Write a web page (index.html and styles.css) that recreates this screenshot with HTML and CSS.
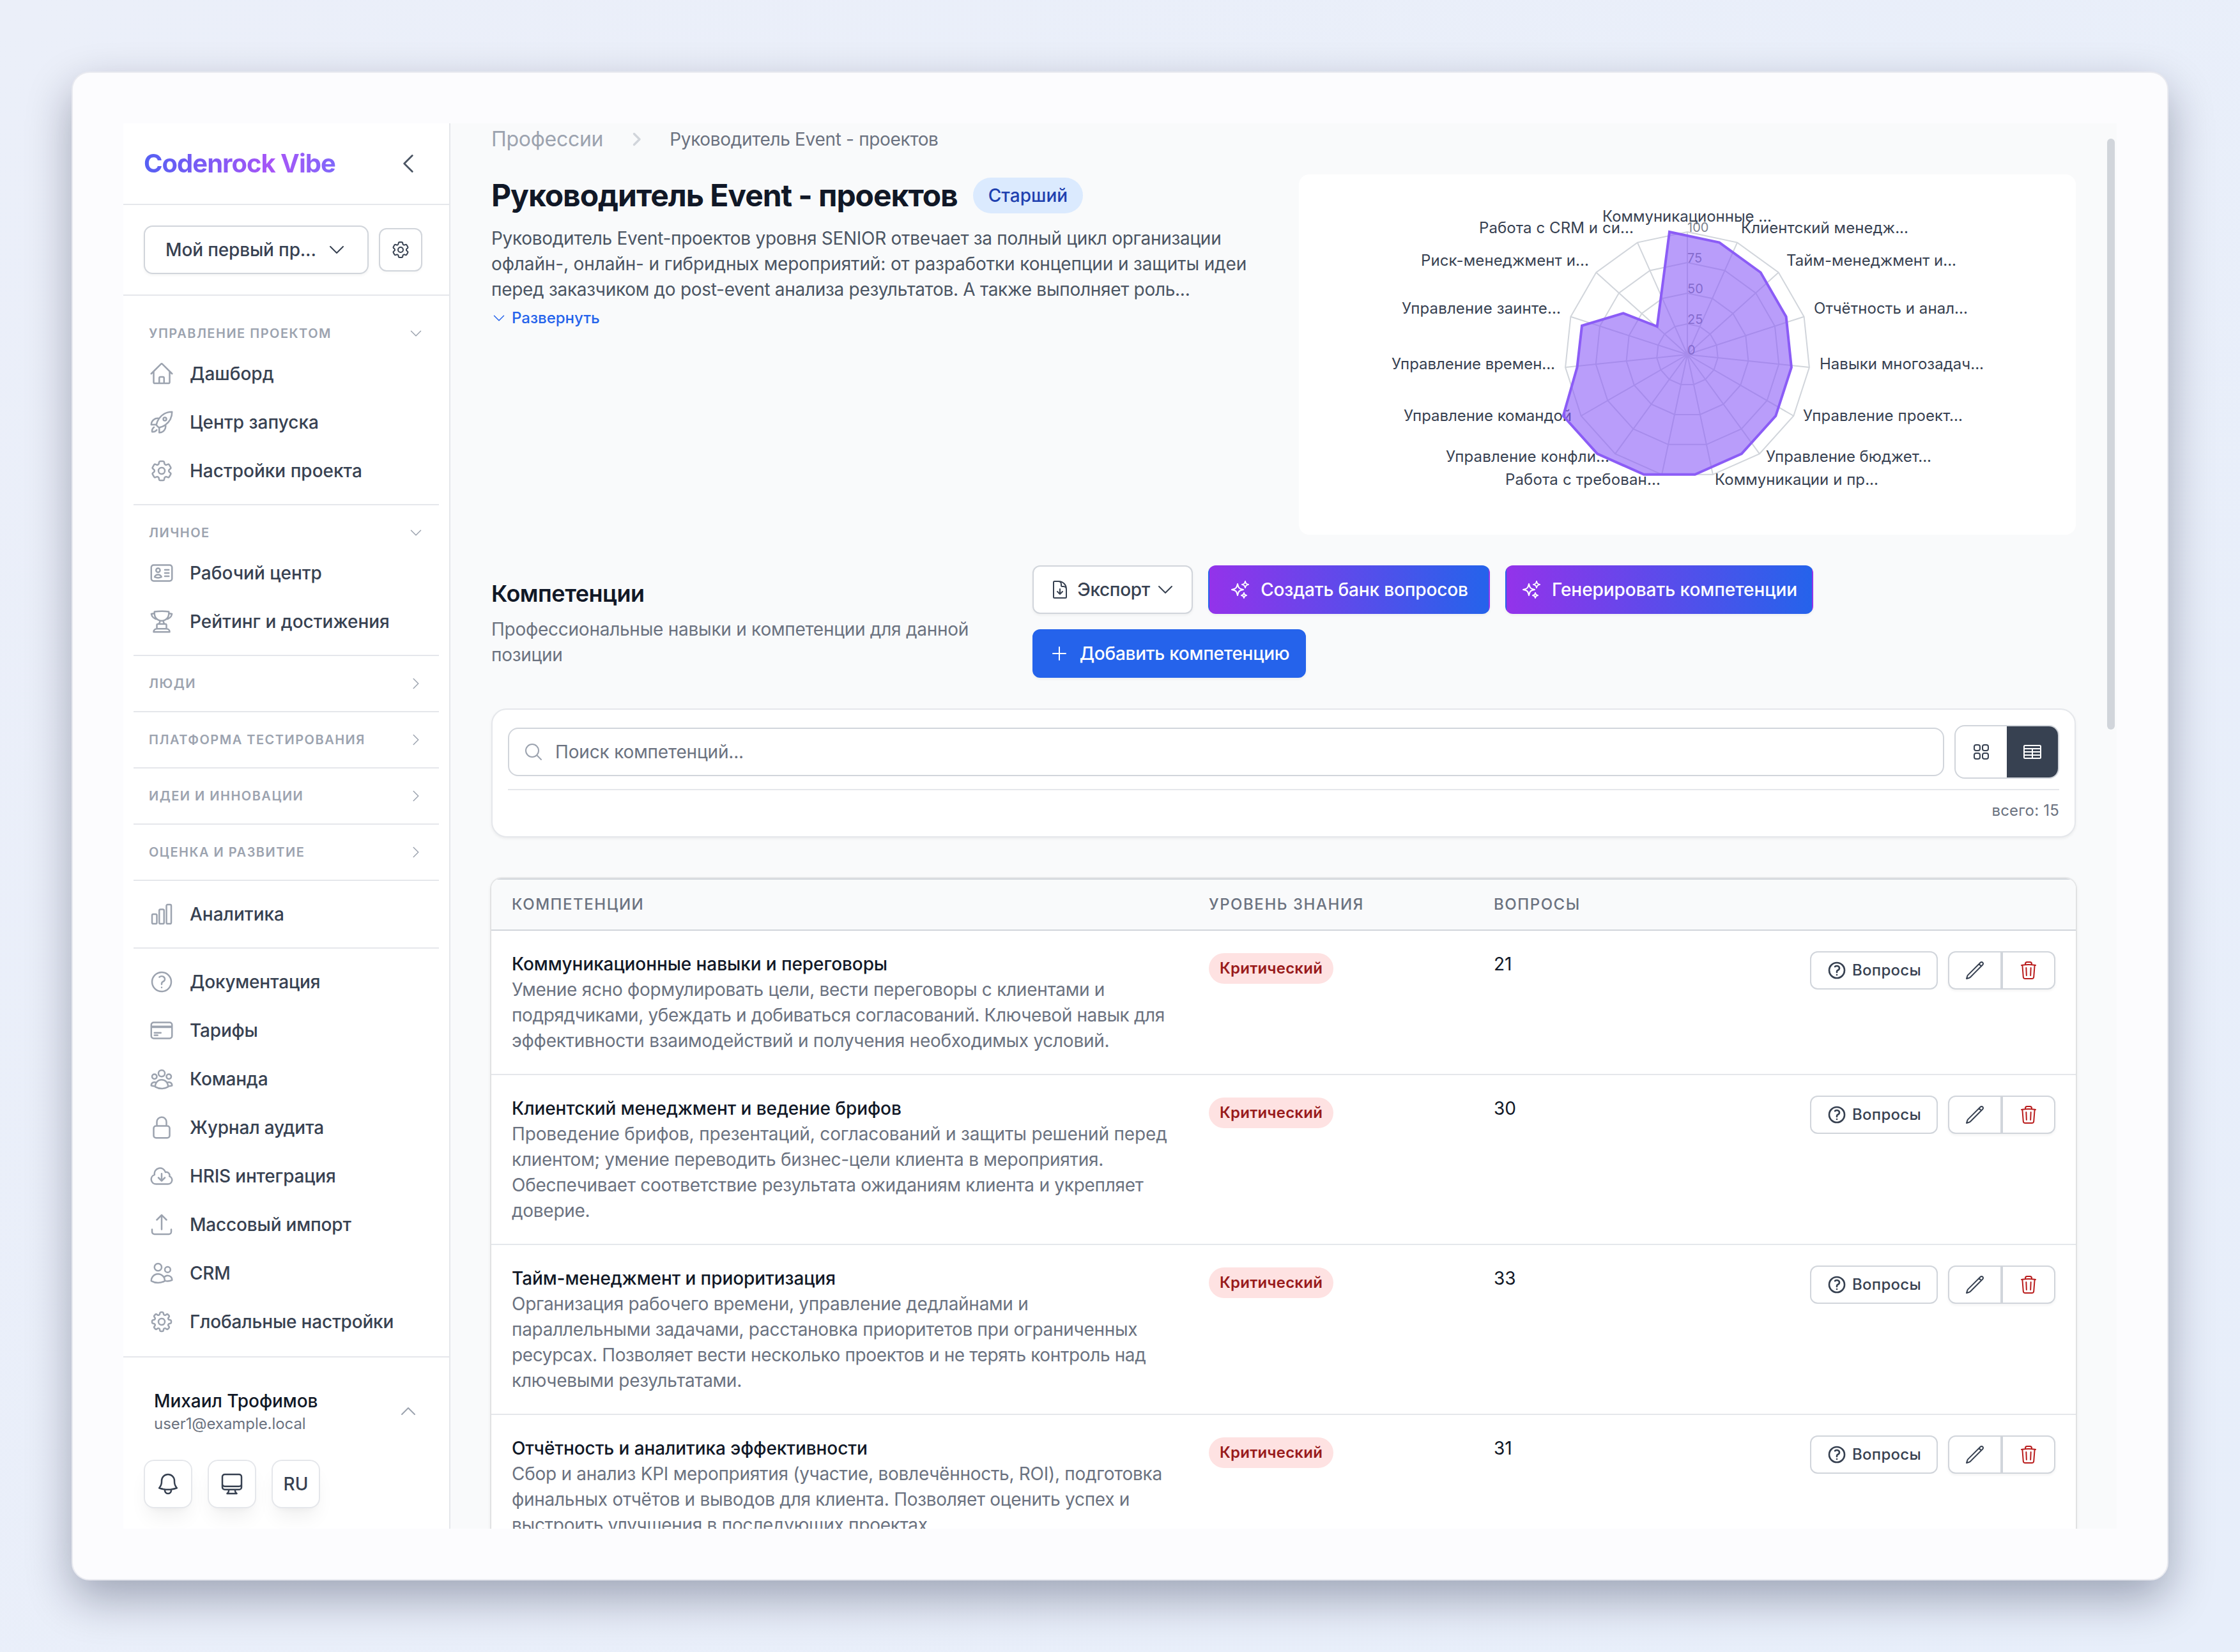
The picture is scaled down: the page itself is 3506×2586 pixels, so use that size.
FILE: index.html
```html
<!DOCTYPE html>
<html lang="ru">
<head>
<meta charset="utf-8">
<title>Codenrock Vibe</title>
<link rel="stylesheet" href="styles.css">
</head>
<body>
<svg class="sprite" aria-hidden="true">
  <symbol id="i-down" viewBox="0 0 24 24"><path d="M19.5 8.25l-7.5 7.5-7.5-7.5"/></symbol>
  <symbol id="i-up" viewBox="0 0 24 24"><path d="M4.5 15.75l7.5-7.5 7.5 7.5"/></symbol>
  <symbol id="i-right" viewBox="0 0 24 24"><path d="M8.25 4.5l7.5 7.5-7.5 7.5"/></symbol>
  <symbol id="i-left" viewBox="0 0 24 24"><path d="M15.75 19.5L8.25 12l7.5-7.5"/></symbol>
  <symbol id="i-crumb" viewBox="0 0 20 20"><path d="M7.75 5.75L12 10l-4.25 4.25"/></symbol>
  <symbol id="i-home" viewBox="0 0 24 24"><path d="M2.25 12l8.954-8.955c.44-.439 1.152-.439 1.591 0L21.75 12M4.5 9.75v10.125c0 .621.504 1.125 1.125 1.125H9.75v-4.875c0-.621.504-1.125 1.125-1.125h2.25c.621 0 1.125.504 1.125 1.125V21h4.125c.621 0 1.125-.504 1.125-1.125V9.75M8.25 21h8.25"/></symbol>
  <symbol id="i-rocket" viewBox="0 0 24 24"><path d="M15.59 14.37a6 6 0 01-5.84 7.38v-4.8m5.84-2.58a14.98 14.98 0 006.16-12.12A14.98 14.98 0 009.631 8.41m5.96 5.96a14.926 14.926 0 01-5.841 2.58m-.119-8.54a6 6 0 00-7.381 5.84h4.8m2.581-5.84a14.927 14.927 0 00-2.58 5.84m2.699 2.7c-.103.021-.207.041-.311.06a15.09 15.09 0 01-2.448-2.448 14.9 14.9 0 01.06-.312m-2.24 2.39a4.493 4.493 0 00-1.757 4.306 4.493 4.493 0 004.306-1.758M16.5 9a1.5 1.5 0 11-3 0 1.5 1.5 0 013 0z"/></symbol>
  <symbol id="i-cog" viewBox="0 0 24 24"><path d="M9.594 3.94c.09-.542.56-.94 1.11-.94h2.593c.55 0 1.02.398 1.11.94l.213 1.281c.063.374.313.686.645.87.074.04.147.083.22.127.324.196.72.257 1.075.124l1.217-.456a1.125 1.125 0 011.37.49l1.296 2.247a1.125 1.125 0 01-.26 1.431l-1.003.827c-.293.24-.438.613-.431.992a6.759 6.759 0 010 .255c-.007.378.138.75.43.99l1.005.828c.424.35.534.954.26 1.43l-1.298 2.247a1.125 1.125 0 01-1.369.491l-1.217-.456c-.355-.133-.75-.072-1.076.124a6.57 6.57 0 01-.22.128c-.331.183-.581.495-.644.869l-.213 1.28c-.09.543-.56.941-1.11.941h-2.594c-.55 0-1.02-.398-1.11-.94l-.213-1.281c-.062-.374-.312-.686-.644-.87a6.52 6.52 0 01-.22-.127c-.325-.196-.72-.257-1.076-.124l-1.217.456a1.125 1.125 0 01-1.369-.49l-1.297-2.247a1.125 1.125 0 01.26-1.431l1.004-.827c.292-.24.437-.613.43-.992a6.932 6.932 0 010-.255c.007-.378-.138-.75-.43-.99l-1.004-.828a1.125 1.125 0 01-.26-1.43l1.297-2.247a1.125 1.125 0 011.37-.491l1.216.456c.356.133.751.072 1.076-.124.072-.044.146-.087.22-.128.332-.183.582-.495.644-.869l.214-1.281z"/><path d="M15 12a3 3 0 11-6 0 3 3 0 016 0z"/></symbol>
  <symbol id="i-cog8" viewBox="0 0 24 24"><path d="M10.343 3.94c.09-.542.56-.94 1.11-.94h1.093c.55 0 1.02.398 1.11.94l.149.894c.07.424.384.764.78.93.398.164.855.142 1.205-.108l.737-.527a1.125 1.125 0 011.45.12l.773.774c.39.389.44 1.002.12 1.45l-.527.737c-.25.35-.272.806-.107 1.204.165.397.505.71.93.78l.893.15c.543.09.94.56.94 1.109v1.094c0 .55-.397 1.02-.94 1.11l-.893.149c-.425.07-.765.383-.93.78-.165.398-.143.854.107 1.204l.527.738c.32.447.269 1.06-.12 1.45l-.774.773a1.125 1.125 0 01-1.449.12l-.738-.527c-.35-.25-.806-.272-1.203-.107-.397.165-.71.505-.781.929l-.149.894c-.09.542-.56.94-1.11.94h-1.094c-.55 0-1.019-.398-1.11-.94l-.148-.894c-.071-.424-.384-.764-.781-.93-.398-.164-.854-.142-1.204.108l-.738.527c-.447.32-1.06.269-1.45-.12l-.773-.774a1.125 1.125 0 01-.12-1.45l.527-.737c.25-.35.273-.806.108-1.204-.165-.397-.505-.71-.93-.78l-.894-.15c-.542-.09-.94-.56-.94-1.109v-1.094c0-.55.398-1.02.94-1.11l.894-.149c.424-.07.765-.383.93-.78.165-.398.143-.854-.107-1.204l-.527-.738a1.125 1.125 0 01.12-1.45l.773-.773a1.125 1.125 0 011.45-.12l.737.527c.35.25.807.272 1.204.107.397-.165.71-.505.78-.929l.15-.894z"/><path d="M15 12a3 3 0 11-6 0 3 3 0 016 0z"/></symbol>
  <symbol id="i-id" viewBox="0 0 24 24"><path d="M15 9h3.75M15 12h3.75M15 15h3.75M4.5 19.5h15a2.25 2.25 0 002.25-2.25V6.75A2.25 2.25 0 0019.5 4.5h-15a2.25 2.25 0 00-2.25 2.25v10.5A2.25 2.25 0 004.5 19.5zm6-10.125a1.875 1.875 0 11-3.75 0 1.875 1.875 0 013.75 0zm1.294 6.336a6.721 6.721 0 01-3.17.789 6.721 6.721 0 01-3.168-.789 3.376 3.376 0 016.338 0z"/></symbol>
  <symbol id="i-trophy" viewBox="0 0 24 24"><path d="M16.5 18.75h-9m9 0a3 3 0 013 3h-15a3 3 0 013-3m9 0v-3.375c0-.621-.503-1.125-1.125-1.125h-.871M7.5 18.75v-3.375c0-.621.504-1.125 1.125-1.125h.872m5.007 0H9.497m5.007 0a7.454 7.454 0 01-.982-3.172M9.497 14.25a7.454 7.454 0 00.981-3.172M5.25 4.236c-.982.143-1.954.317-2.916.52A6.003 6.003 0 007.73 9.728M5.25 4.236V4.5c0 2.108.966 3.99 2.48 5.228M5.25 4.236V2.721C7.456 2.41 9.71 2.25 12 2.25c2.291 0 4.545.16 6.75.47v1.516M7.73 9.728a6.726 6.726 0 002.748 1.35m8.272-6.842V4.5c0 2.108-.966 3.99-2.48 5.228m2.48-5.492a46.32 46.32 0 012.916.52 6.003 6.003 0 01-5.395 4.972m0 0a6.726 6.726 0 01-2.749 1.35m0 0a6.772 6.772 0 01-3.044 0"/></symbol>
  <symbol id="i-chart" viewBox="0 0 24 24"><path d="M3 13.125C3 12.504 3.504 12 4.125 12h2.25c.621 0 1.125.504 1.125 1.125v6.75C7.5 20.496 6.996 21 6.375 21h-2.25A1.125 1.125 0 013 19.875v-6.75zM9.75 8.625c0-.621.504-1.125 1.125-1.125h2.25c.621 0 1.125.504 1.125 1.125v11.25c0 .621-.504 1.125-1.125 1.125h-2.25a1.125 1.125 0 01-1.125-1.125V8.625zM16.5 4.125c0-.621.504-1.125 1.125-1.125h2.25C20.496 3 21 3.504 21 4.125v15.75c0 .621-.504 1.125-1.125 1.125h-2.25a1.125 1.125 0 01-1.125-1.125V4.125z"/></symbol>
  <symbol id="i-help" viewBox="0 0 24 24"><path d="M9.879 7.519c1.171-1.025 3.071-1.025 4.242 0 1.172 1.025 1.172 2.687 0 3.712-.203.179-.43.326-.67.442-.745.361-1.45.999-1.45 1.827v.75M21 12a9 9 0 11-18 0 9 9 0 0118 0zm-9 5.25h.008v.008H12v-.008z"/></symbol>
  <symbol id="i-card" viewBox="0 0 24 24"><path d="M2.25 8.25h19.5M2.25 9h19.5m-16.5 5.25h6m-6 2.25h3m-3.75 3h15a2.25 2.25 0 002.25-2.25V6.75A2.25 2.25 0 0019.5 4.5h-15a2.25 2.25 0 00-2.25 2.25v10.5A2.25 2.25 0 004.5 19.5z"/></symbol>
  <symbol id="i-group" viewBox="0 0 24 24"><path d="M18 18.72a9.094 9.094 0 003.741-.479 3 3 0 00-4.682-2.72m.94 3.198l.001.031c0 .225-.012.447-.037.666A11.944 11.944 0 0112 21c-2.17 0-4.207-.576-5.963-1.584A6.062 6.062 0 016 18.719m12 0a5.971 5.971 0 00-.941-3.197m0 0A5.995 5.995 0 0012 12.75a5.995 5.995 0 00-5.058 2.772m0 0a3 3 0 00-4.681 2.72 8.986 8.986 0 003.74.477m.94-3.197a5.971 5.971 0 00-.94 3.197M15 6.75a3 3 0 11-6 0 3 3 0 016 0zm6 3a2.25 2.25 0 11-4.5 0 2.25 2.25 0 014.5 0zm-13.5 0a2.25 2.25 0 11-4.5 0 2.25 2.25 0 014.5 0z"/></symbol>
  <symbol id="i-lock" viewBox="0 0 24 24"><path d="M16.5 10.5V6.75a4.5 4.5 0 10-9 0v3.75m-.75 11.25h10.5a2.25 2.25 0 002.25-2.25v-6.75a2.25 2.25 0 00-2.25-2.25H6.75a2.25 2.25 0 00-2.25 2.25v6.75a2.25 2.25 0 002.25 2.25z"/></symbol>
  <symbol id="i-cloud" viewBox="0 0 24 24"><path d="M12 9.75v6.75m0 0l-3-3m3 3l3-3m-8.25 6a4.5 4.5 0 01-1.41-8.775 5.25 5.25 0 0110.233-2.33 3 3 0 013.758 3.848A3.752 3.752 0 0118 19.5H6.75z"/></symbol>
  <symbol id="i-upload" viewBox="0 0 24 24"><path d="M3 16.5v2.25A2.25 2.25 0 005.25 21h13.5A2.25 2.25 0 0021 18.75V16.5m-13.5-9L12 3m0 0l4.5 4.5M12 3v13.5"/></symbol>
  <symbol id="i-users" viewBox="0 0 24 24"><path d="M15 19.128a9.38 9.38 0 002.625.372 9.337 9.337 0 004.121-.952 4.125 4.125 0 00-7.533-2.493M15 19.128v-.003c0-1.113-.285-2.16-.786-3.07M15 19.128v.106A12.318 12.318 0 018.624 21c-2.331 0-4.512-.645-6.374-1.766l-.001-.109a6.375 6.375 0 0111.964-3.07M12 6.375a3.375 3.375 0 11-6.75 0 3.375 3.375 0 016.75 0zm8.25 2.25a2.625 2.625 0 11-5.25 0 2.625 2.625 0 015.25 0z"/></symbol>
  <symbol id="i-bell" viewBox="0 0 24 24"><path d="M14.857 17.082a23.848 23.848 0 005.454-1.31A8.967 8.967 0 0118 9.75v-.7V9A6 6 0 006 9v.75a8.967 8.967 0 01-2.312 6.022c1.733.64 3.56 1.085 5.455 1.31m5.714 0a24.255 24.255 0 01-5.714 0m5.714 0a3 3 0 11-5.714 0"/></symbol>
  <symbol id="i-desktop" viewBox="0 0 24 24"><path d="M9 17.25v1.007a3 3 0 01-.879 2.122L7.5 21h9l-.621-.621A3 3 0 0115 18.257V17.25m6-12V15a2.25 2.25 0 01-2.25 2.25H5.25A2.25 2.25 0 013 15V5.25m18 0A2.25 2.25 0 0018.75 3H5.25A2.25 2.25 0 003 5.25m18 0V12a2.25 2.25 0 01-2.25 2.25H5.25A2.25 2.25 0 013 12V5.25"/></symbol>
  <symbol id="i-doc" viewBox="0 0 24 24"><path d="M19.5 14.25v-2.625a3.375 3.375 0 00-3.375-3.375h-1.5A1.125 1.125 0 0113.5 7.125v-1.5a3.375 3.375 0 00-3.375-3.375H8.25m.75 12l3 3m0 0l3-3m-3 3v-6m-1.5-9H5.625c-.621 0-1.125.504-1.125 1.125v17.25c0 .621.504 1.125 1.125 1.125h12.75c.621 0 1.125-.504 1.125-1.125V11.25a9 9 0 00-9-9z"/></symbol>
  <symbol id="i-sparkles" viewBox="0 0 24 24"><path d="M9.813 15.904L9 18.75l-.813-2.846a4.5 4.5 0 00-3.09-3.09L2.25 12l2.846-.813a4.5 4.5 0 003.09-3.09L9 5.25l.813 2.846a4.5 4.5 0 003.09 3.09L15.75 12l-2.846.813a4.5 4.5 0 00-3.09 3.09zM18.259 8.715L18 9.75l-.259-1.035a3.375 3.375 0 00-2.455-2.456L14.25 6l1.036-.259a3.375 3.375 0 002.455-2.456L18 2.25l.259 1.035a3.375 3.375 0 002.456 2.456L21.75 6l-1.035.259a3.375 3.375 0 00-2.456 2.456zM16.894 20.567L16.5 21.75l-.394-1.183a2.25 2.25 0 00-1.423-1.423L13.5 18.75l1.183-.394a2.25 2.25 0 001.423-1.423l.394-1.183.394 1.183a2.25 2.25 0 001.423 1.423l1.183.394-1.183.394a2.25 2.25 0 00-1.423 1.423z"/></symbol>
  <symbol id="i-plus" viewBox="0 0 24 24"><path d="M12 4.5v15m7.5-7.5h-15"/></symbol>
  <symbol id="i-search" viewBox="0 0 24 24"><path d="M21 21l-5.197-5.197m0 0A7.5 7.5 0 105.196 5.196a7.5 7.5 0 0010.607 10.607z"/></symbol>
  <symbol id="i-grid" viewBox="0 0 24 24"><path d="M3.75 6A2.25 2.25 0 016 3.75h2.25A2.25 2.25 0 0110.5 6v2.25a2.25 2.25 0 01-2.25 2.25H6a2.25 2.25 0 01-2.25-2.25V6zM3.75 15.75A2.25 2.25 0 016 13.5h2.25a2.25 2.25 0 012.25 2.25V18a2.25 2.25 0 01-2.25 2.25H6A2.25 2.25 0 013.75 18v-2.25zM13.5 6a2.25 2.25 0 012.25-2.25H18A2.25 2.25 0 0120.25 6v2.25A2.25 2.25 0 0118 10.5h-2.25a2.25 2.25 0 01-2.25-2.25V6zM13.5 15.75a2.25 2.25 0 012.25-2.25H18a2.25 2.25 0 012.25 2.25V18A2.25 2.25 0 0118 20.25h-2.25A2.25 2.25 0 0113.5 18v-2.25z"/></symbol>
  <symbol id="i-table" viewBox="0 0 24 24"><rect x="2.25" y="4.5" width="19.5" height="15" rx="1.125"/><path d="M2.25 8.25h19.5M2.25 12h19.5M2.25 15.75h19.5M12 8.25V19.5"/></symbol>
  <symbol id="i-pencil" viewBox="0 0 24 24"><path d="M16.862 4.487l1.687-1.688a1.875 1.875 0 112.652 2.652L6.832 19.82a4.5 4.5 0 01-1.897 1.13l-2.685.8.8-2.685a4.5 4.5 0 011.13-1.897L16.863 4.487zm0 0L19.5 7.125"/></symbol>
  <symbol id="i-trash" viewBox="0 0 24 24"><path d="M14.74 9l-.346 9m-4.788 0L9.26 9m9.968-3.21c.342.052.682.107 1.022.166m-1.022-.165L18.16 19.673a2.25 2.25 0 01-2.244 2.077H8.084a2.25 2.25 0 01-2.244-2.077L4.772 5.79m14.456 0a48.108 48.108 0 00-3.478-.397m-12 .562c.34-.059.68-.114 1.022-.165m0 0a48.11 48.11 0 013.478-.397m7.5 0v-.916c0-1.18-.91-2.164-2.09-2.201a51.964 51.964 0 00-3.32 0c-1.18.037-2.09 1.022-2.09 2.201v.916m7.5 0a48.667 48.667 0 00-7.5 0"/></symbol>
</svg>

<div class="frame">
<div class="app">

<aside class="sidebar">
  <header class="brand">
    <span class="brand-name">Codenrock Vibe</span>
    <svg class="icon brand-toggle"><use href="#i-left"/></svg>
  </header>
  <div class="project">
    <button class="project-select"><span>Мой первый пр...</span><svg class="icon i32"><use href="#i-down"/></svg></button>
    <button class="project-settings"><svg class="icon i32"><use href="#i-cog"/></svg></button>
  </div>
  <nav class="nav">
    <section>
      <h3>Управление проектом<svg class="icon i24"><use href="#i-down"/></svg></h3>
      <a><svg class="icon"><use href="#i-home"/></svg>Дашборд</a>
      <a><svg class="icon"><use href="#i-rocket"/></svg>Центр запуска</a>
      <a><svg class="icon"><use href="#i-cog"/></svg>Настройки проекта</a>
    </section>
    <section>
      <h3>Личное<svg class="icon i24"><use href="#i-down"/></svg></h3>
      <a><svg class="icon"><use href="#i-id"/></svg>Рабочий центр</a>
      <a><svg class="icon"><use href="#i-trophy"/></svg>Рейтинг и достижения</a>
    </section>
    <section><h3>Люди<svg class="icon i24"><use href="#i-right"/></svg></h3></section>
    <section><h3>Платформа тестирования<svg class="icon i24"><use href="#i-right"/></svg></h3></section>
    <section><h3>Идеи и инновации<svg class="icon i24"><use href="#i-right"/></svg></h3></section>
    <section><h3>Оценка и развитие<svg class="icon i24"><use href="#i-right"/></svg></h3></section>
    <section>
      <a><svg class="icon"><use href="#i-chart"/></svg>Аналитика</a>
    </section>
    <section class="dense">
      <a><svg class="icon"><use href="#i-help"/></svg>Документация</a>
      <a><svg class="icon"><use href="#i-card"/></svg>Тарифы</a>
      <a><svg class="icon"><use href="#i-group"/></svg>Команда</a>
      <a><svg class="icon"><use href="#i-lock"/></svg>Журнал аудита</a>
      <a><svg class="icon"><use href="#i-cloud"/></svg>HRIS интеграция</a>
      <a><svg class="icon"><use href="#i-upload"/></svg>Массовый импорт</a>
      <a><svg class="icon"><use href="#i-users"/></svg>CRM</a>
      <a><svg class="icon"><use href="#i-cog8"/></svg>Глобальные настройки</a>
    </section>
  </nav>
  <footer class="account">
    <div class="user">
      <div><div class="user-name">Михаил Трофимов</div><div class="user-mail">user1@example.local</div></div>
      <svg class="icon i32"><use href="#i-up"/></svg>
    </div>
    <div class="quick">
      <button><svg class="icon"><use href="#i-bell"/></svg></button>
      <button><svg class="icon"><use href="#i-desktop"/></svg></button>
      <button>RU</button>
    </div>
  </footer>
</aside>

<main class="main">
  <div class="crumbs">
    <span class="crumb-root">Профессии</span>
    <svg class="icon crumb-sep"><use href="#i-crumb"/></svg>
    <span class="crumb-page">Руководитель Event - проектов</span>
  </div>

  <div class="hero">
    <div class="hero-text">
      <div class="title-row"><h1>Руководитель Event - проектов</h1><span class="level">Старший</span></div>
      <p>Руководитель Event-проектов уровня SENIOR отвечает за полный цикл организации<br><span class="loose">офлайн-, онлайн- и гибридных мероприятий: от разработки концепции и защиты идеи</span><br>перед заказчиком до post-event анализа результатов. А также выполняет роль...</p>
      <a class="expand"><svg class="icon i24"><use href="#i-down"/></svg>Развернуть</a>
    </div>
    <div class="chart">
      <svg class="radar" viewBox="-608 -282 1216 564">
        <defs><polygon id="ring" points="0,-192 78.1,-175.4 142.7,-128.5 182.6,-59.3 190.9,20.1 166.3,96 112.9,155.3 39.9,187.8 -39.9,187.8 -112.9,155.3 -166.3,96 -190.9,20.1 -182.6,-59.3 -142.7,-128.5 -78.1,-175.4" vector-effect="non-scaling-stroke"/></defs>
        <g class="rings">
          <use href="#ring"/><use href="#ring" transform="scale(.75)"/><use href="#ring" transform="scale(.5)"/><use href="#ring" transform="scale(.25)"/>
          <path d="M0 0V-192M0 0L78.1-175.4M0 0L142.7-128.5M0 0L182.6-59.3M0 0L190.9 20.1M0 0L166.3 96M0 0L112.9 155.3M0 0L39.9 187.8M0 0L-39.9 187.8M0 0L-112.9 155.3M0 0L-166.3 96M0 0L-190.9 20.1M0 0L-182.6-59.3M0 0L-142.7-128.5M0 0L-78.1-175.4"/>
        </g>
        <g class="labels">
          <text x="-133" y="-208" textLength="265">Коммуникационные ...</text>
          <text x="84" y="-190" textLength="262">Клиентский менедж...</text>
          <text x="155" y="-139" textLength="266">Тайм-менеджмент и...</text>
          <text x="198" y="-64" textLength="241">Отчётность и анал...</text>
          <text x="207" y="22.5" textLength="257">Навыки многозадач...</text>
          <text x="181" y="104" textLength="250">Управление проект...</text>
          <text x="123" y="168" textLength="259">Управление бюджет...</text>
          <text x="43" y="203.5" textLength="256">Коммуникации и пр...</text>
          <text x="-285" y="203.5" textLength="243">Работа с требован...</text>
          <text x="-378" y="168" textLength="256">Управление конфли...</text>
          <text x="-444" y="104" textLength="263">Управление командой</text>
          <text x="-463" y="22.5" textLength="256">Управление времен...</text>
          <text x="-447" y="-64" textLength="249">Управление заинте...</text>
          <text x="-417" y="-139" textLength="263">Риск-менеджмент и...</text>
          <text x="-326" y="-190" textLength="242">Работа с CRM и си...</text>
        </g>
        <g class="ticks">
          <text x="0" y="0">0</text><text x="0" y="-48">25</text><text x="0" y="-96">50</text><text x="0" y="-144">75</text><text x="0" y="-192">100</text>
        </g>
        <polygon class="area" points="-28,-192 50.1,-175.4 114.7,-128.5 154.6,-59.3 162.9,20.1 138.3,96 84.9,155.3 11.9,187.8 -67.9,187.8 -140.9,155.3 -194.3,96 -172.5,20.1 -165,-45.2 -100.3,-64.6 -47.3,-44"/>
      </svg>
    </div>
  </div>

  <div class="section-head">
    <div class="section-text">
      <h2>Компетенции</h2>
      <p>Профессиональные навыки и компетенции для данной<br>позиции</p>
    </div>
    <div class="actions">
      <button class="btn btn-white"><svg class="icon i32"><use href="#i-doc"/></svg>Экспорт<svg class="icon i32 caret"><use href="#i-down"/></svg></button>
      <button class="btn btn-gradient wide"><svg class="icon i32"><use href="#i-sparkles"/></svg>Создать банк вопросов</button>
      <button class="btn btn-gradient gen"><svg class="icon i32"><use href="#i-sparkles"/></svg>Генерировать компетенции</button>
      <button class="btn btn-blue"><svg class="icon i32"><use href="#i-plus"/></svg>Добавить компетенцию</button>
    </div>
  </div>

  <div class="filters">
    <div class="filters-row">
      <div class="search"><svg class="icon i32"><use href="#i-search"/></svg><span>Поиск компетенций...</span></div>
      <div class="view">
        <span><svg class="icon i32"><use href="#i-grid"/></svg></span>
        <span class="on"><svg class="icon i32"><use href="#i-table"/></svg></span>
      </div>
    </div>
    <div class="total">всего: 15</div>
  </div>

  <div class="table">
    <div class="row thead"><span>Компетенции</span><span>Уровень знания</span><span>Вопросы</span></div>
    <div class="row">
      <div class="skill"><b>Коммуникационные навыки и переговоры</b>Умение ясно формулировать цели, вести переговоры с клиентами и<br><span class="tight">подрядчиками, убеждать и добиваться согласований. Ключевой навык для</span><br>эффективности взаимодействий и получения необходимых условий.</div>
      <div class="lvl"><span>Критический</span></div><div class="num">21</div>
      <div class="ops"><button class="ask"><svg class="icon i32"><use href="#i-help"/></svg>Вопросы</button><div class="pair"><button><svg class="icon i32"><use href="#i-pencil"/></svg></button><button class="del"><svg class="icon i32"><use href="#i-trash"/></svg></button></div></div>
    </div>
    <div class="row">
      <div class="skill"><b>Клиентский менеджмент и ведение брифов</b><span class="loose">Проведение брифов, презентаций, согласований и защиты решений перед</span><br>клиентом; умение переводить бизнес-цели клиента в мероприятия.<br>Обеспечивает соответствие результата ожиданиям клиента и укрепляет<br>доверие.</div>
      <div class="lvl"><span>Критический</span></div><div class="num">30</div>
      <div class="ops"><button class="ask"><svg class="icon i32"><use href="#i-help"/></svg>Вопросы</button><div class="pair"><button><svg class="icon i32"><use href="#i-pencil"/></svg></button><button class="del"><svg class="icon i32"><use href="#i-trash"/></svg></button></div></div>
    </div>
    <div class="row">
      <div class="skill"><b>Тайм-менеджмент и приоритизация</b>Организация рабочего времени, управление дедлайнами и<br>параллельными задачами, расстановка приоритетов при ограниченных<br><span class="tight">ресурсах. Позволяет вести несколько проектов и не терять контроль над</span><br>ключевыми результатами.</div>
      <div class="lvl"><span>Критический</span></div><div class="num">33</div>
      <div class="ops"><button class="ask"><svg class="icon i32"><use href="#i-help"/></svg>Вопросы</button><div class="pair"><button><svg class="icon i32"><use href="#i-pencil"/></svg></button><button class="del"><svg class="icon i32"><use href="#i-trash"/></svg></button></div></div>
    </div>
    <div class="row">
      <div class="skill"><b>Отчётность и аналитика эффективности</b>Сбор и анализ KPI мероприятия (участие, вовлечённость, ROI), подготовка<br>финальных отчётов и выводов для клиента. Позволяет оценить успех и<br>выстроить улучшения в последующих проектах.</div>
      <div class="lvl"><span>Критический</span></div><div class="num">31</div>
      <div class="ops"><button class="ask"><svg class="icon i32"><use href="#i-help"/></svg>Вопросы</button><div class="pair"><button><svg class="icon i32"><use href="#i-pencil"/></svg></button><button class="del"><svg class="icon i32"><use href="#i-trash"/></svg></button></div></div>
    </div>
  </div>
  <i class="scrollbar"></i>
</main>

</div>
</div>
</body>
</html>
```
FILE: styles.css
```css
* { box-sizing: border-box; }
body {
  margin: 0;
  height: 2586px;
  padding: 112px;
  overflow: hidden;
  background: linear-gradient(135deg, #ebeff9, #e7eefa);
  font: 400 28px/40px Inter, "Noto Sans", sans-serif;
  color: #111827;
}
h1, h2, h3, p { margin: 0; }
button {
  font: inherit;
  color: #374151;
  background: #fff;
  border: 2px solid #d1d5db;
  border-radius: 12px;
  padding: 0;
  display: flex;
  align-items: center;
  justify-content: center;
  white-space: nowrap;
}
.sprite { display: none; }
.icon {
  width: 40px;
  height: 40px;
  flex: none;
  display: block;
  fill: none;
  stroke: currentColor;
  stroke-width: 1.5;
  stroke-linecap: round;
  stroke-linejoin: round;
}
.i32 { width: 32px; height: 32px; }
.i24 { width: 24px; height: 24px; }

.frame {
  width: 3282px;
  height: 2362px;
  padding: 79px;
  border: 2px solid #e9eaf0;
  border-radius: 28px;
  background: #fcfcfe;
  box-shadow: 0 28px 70px rgba(0, 8, 40, .32);
}
.app {
  height: 2200px;
  display: flex;
  overflow: hidden;
  background: #f9fafb;
}

/* Sidebar */
.sidebar {
  width: 512px;
  flex: none;
  display: flex;
  flex-direction: column;
  background: #fff;
  border-right: 2px solid #e5e7eb;
}
.brand {
  height: 128px;
  padding: 0 44px 0 32px;
  display: flex;
  align-items: center;
  justify-content: space-between;
  border-bottom: 2px solid #e5e7eb;
}
.brand-name {
  font-size: 40px;
  line-height: 56px;
  font-weight: 700;
  letter-spacing: -1px;
  background: linear-gradient(90deg, #5560f3, #a855f7 68%, #8068fa);
  -webkit-background-clip: text;
  background-clip: text;
  color: transparent;
}
.brand-toggle { color: #4b5563; stroke-width: 1.7; }
.project {
  height: 142px;
  padding: 0 42px 0 32px;
  display: flex;
  align-items: center;
  justify-content: space-between;
  border-bottom: 2px solid #e5e7eb;
}
.project-select {
  width: 352px;
  height: 76px;
  padding: 0 32px;
  justify-content: space-between;
  border-radius: 14px;
  font-weight: 500;
  letter-spacing: -.15px;
  box-shadow: 0 2px 4px rgba(0, 0, 0, .05);
}
.project-settings { width: 68px; height: 68px; box-shadow: 0 2px 4px rgba(0, 0, 0, .03); }
.nav { flex: 1; padding: 16px 16px 0; }
.nav section { padding: 16px 0; border-top: 2px solid #e5e7eb; }
.nav section:first-child { border-top: 0; }
.nav h3 {
  height: 54px;
  padding: 0 24px;
  display: flex;
  align-items: center;
  justify-content: space-between;
  font-size: 20px;
  font-weight: 600;
  letter-spacing: 1.5px;
  text-transform: uppercase;
  color: #9ca3af;
}
.nav a {
  height: 72px;
  padding: 0 24px;
  display: flex;
  align-items: center;
  gap: 24px;
  font-weight: 500;
  color: #374151;
}
.nav a + a { margin-top: 4px; }
.nav a .icon { color: #9ca3af; }
.nav .dense a { letter-spacing: -.18px; }
.account { height: 270px; padding: 48px 32px 32px; border-top: 2px solid #e5e7eb; }
.user { padding: 0 16px; display: flex; align-items: center; justify-content: space-between; }
.user .icon { color: #9ca3af; }
.user-name { font-weight: 500; letter-spacing: -.06px; }
.user-mail { font-size: 24px; line-height: 32px; letter-spacing: -.06px; color: #6b7280; }
.quick { display: flex; gap: 24px; margin-top: 40px; }
.quick button {
  width: 76px;
  height: 76px;
  border-color: #e5e7eb;
  border-radius: 16px;
  font-weight: 500;
  box-shadow: 0 20px 30px -6px rgba(0, 0, 0, .06), 0 8px 12px -8px rgba(0, 0, 0, .05);
}

/* Main column */
.main { flex: 1; position: relative; padding: 0 64px; }
.scrollbar {
  position: absolute;
  right: 3px;
  top: 24px;
  width: 12px;
  height: 925px;
  border-radius: 6px;
  background: #d1d5db;
}
.crumbs { height: 48px; padding-top: 1px; display: flex; align-items: center; color: #9ca3af; }
.crumb-root { font-size: 32px; letter-spacing: -.28px; }
.crumb-sep { color: #d1d5db; margin: 0 31px 0 33px; stroke-width: 1.7; }
.crumb-page { letter-spacing: -.33px; color: #6b7280; }
.hero { margin-top: 32px; display: grid; grid-template-columns: 1fr 1fr; gap: 48px; }
.title-row { height: 65px; padding-top: 1px; display: flex; align-items: center; gap: 24px; }
h1 { font-size: 48px; line-height: 64px; font-weight: 700; letter-spacing: -1.06px; white-space: nowrap; }
.level {
  height: 56px;
  padding: 0 24px;
  border-radius: 28px;
  background: #dbeafe;
  color: #1e40af;
  font-weight: 500;
  line-height: 56px;
  letter-spacing: .05px;
}
.hero-text p { margin-top: 15px; color: #4b5563; letter-spacing: -.29px; white-space: nowrap; }
.hero-text .loose { letter-spacing: -.14px; }
.expand {
  margin-top: 9px;
  display: flex;
  align-items: center;
  gap: 8px;
  font-size: 24px;
  line-height: 32px;
  font-weight: 450;
  color: #2563eb;
}
.chart { height: 564px; border-radius: 16px; background: #fff; }
.radar { display: block; width: 1216px; height: 564px; }
.rings { fill: none; stroke: #d1d5db; stroke-width: 2; }
.labels { font-size: 24px; fill: #374151; }
.ticks { font-size: 20px; fill: #6b7280; fill-opacity: .9; }
.area { fill: #8b5cf6; fill-opacity: .6; stroke: #8b5cf6; stroke-width: 4; }

.section-head { margin-top: 48px; height: 176px; display: flex; justify-content: space-between; align-items: center; }
h2 { font-size: 36px; line-height: 48px; font-weight: 600; letter-spacing: -.49px; }
.section-text { padding-top: 4px; }
.section-text p { margin-top: 12px; color: #6b7280; letter-spacing: -.26px; }
.actions { width: 1633px; display: flex; flex-wrap: wrap; gap: 24px; }
.btn { height: 76px; padding: 0 24px; gap: 16px; font-weight: 500; letter-spacing: -.05px; box-shadow: 0 2px 4px rgba(0, 0, 0, .05); }
.btn-white { width: 251px; gap: 11px; letter-spacing: -.35px; }
.btn-white .caret { margin-left: -3px; }
.btn-gradient { color: #fff; border-color: transparent; background: linear-gradient(90deg, #9333ea, #2563eb); }
.wide { width: 441px; letter-spacing: -.15px; }
.gen { width: 482px; margin-right: 200px; }
.btn-blue { width: 428px; letter-spacing: -.27px; color: #fff; background: #2563eb; border-color: #2563eb; }

.filters {
  margin-top: 48px;
  height: 202px;
  padding: 24px;
  border: 2px solid #e5e7eb;
  border-radius: 24px;
  background: #fff;
  box-shadow: 0 2px 4px rgba(0, 0, 0, .06);
}
.filters-row { display: flex; align-items: center; gap: 16px; padding-bottom: 16px; border-bottom: 2px solid #e5e7eb; }
.search {
  flex: 1;
  height: 76px;
  padding: 0 22px;
  display: flex;
  align-items: center;
  gap: 18px;
  border: 2px solid #d1d5db;
  border-radius: 16px;
  letter-spacing: -.17px;
  color: #6b7280;
}
.search .icon { color: #9ca3af; }
.view { width: 164px; height: 84px; display: flex; border: 2px solid #d1d5db; border-radius: 16px; overflow: hidden; color: #374151; }
.view span { flex: 1; display: grid; place-items: center; }
.view .on { background: #374151; color: #fff; }
.total { margin-top: 16px; text-align: right; font-size: 24px; line-height: 32px; letter-spacing: .2px; color: #6b7280; }

.table {
  margin-top: 64px;
  height: 1100px;
  overflow: hidden;
  border-radius: 16px 16px 0 0;
  background: #fff;
  box-shadow: 0 0 0 2px rgba(0, 0, 0, .06), 0 2px 6px rgba(0, 0, 0, .1);
}
.row {
  display: grid;
  grid-template-columns: 1091px 446px 300px 1fr;
  padding: 32px;
  border-bottom: 2px solid #e5e7eb;
}
.thead {
  height: 82px;
  padding: 0 32px;
  align-items: center;
  border: solid #d1d5db;
  border-width: 2px 0;
  background: #f9fafb;
  font-size: 24px;
  font-weight: 500;
  letter-spacing: 1.55px;
  text-transform: uppercase;
  color: #6b7280;
}
.skill { color: #6b7280; letter-spacing: -.28px; white-space: nowrap; }
.skill b { display: block; font-weight: 500; letter-spacing: -.09px; color: #111827; }
.skill .tight { letter-spacing: -.38px; }
.skill .loose { letter-spacing: -.16px; }
.lvl { padding-top: 3px; }
.lvl span {
  display: inline-block;
  height: 48px;
  padding: 0 17px;
  border-radius: 24px;
  background: #fee2e2;
  color: #991b1b;
  font-size: 24px;
  line-height: 48px;
  font-weight: 600;
  letter-spacing: .2px;
}
.ops { display: flex; justify-content: flex-end; gap: 16px; height: 60px; }
.ask { width: 200px; height: 60px; gap: 8px; font-size: 24px; font-weight: 500; letter-spacing: .3px; }
.ask .icon { stroke-width: 2; }
.pair { display: flex; border-radius: 12px; box-shadow: 0 2px 4px rgba(0, 0, 0, .05); }
.pair button { width: 84px; height: 60px; border-radius: 12px 0 0 12px; }
.pair .del { border-radius: 0 12px 12px 0; color: #b91c1c; }
```
